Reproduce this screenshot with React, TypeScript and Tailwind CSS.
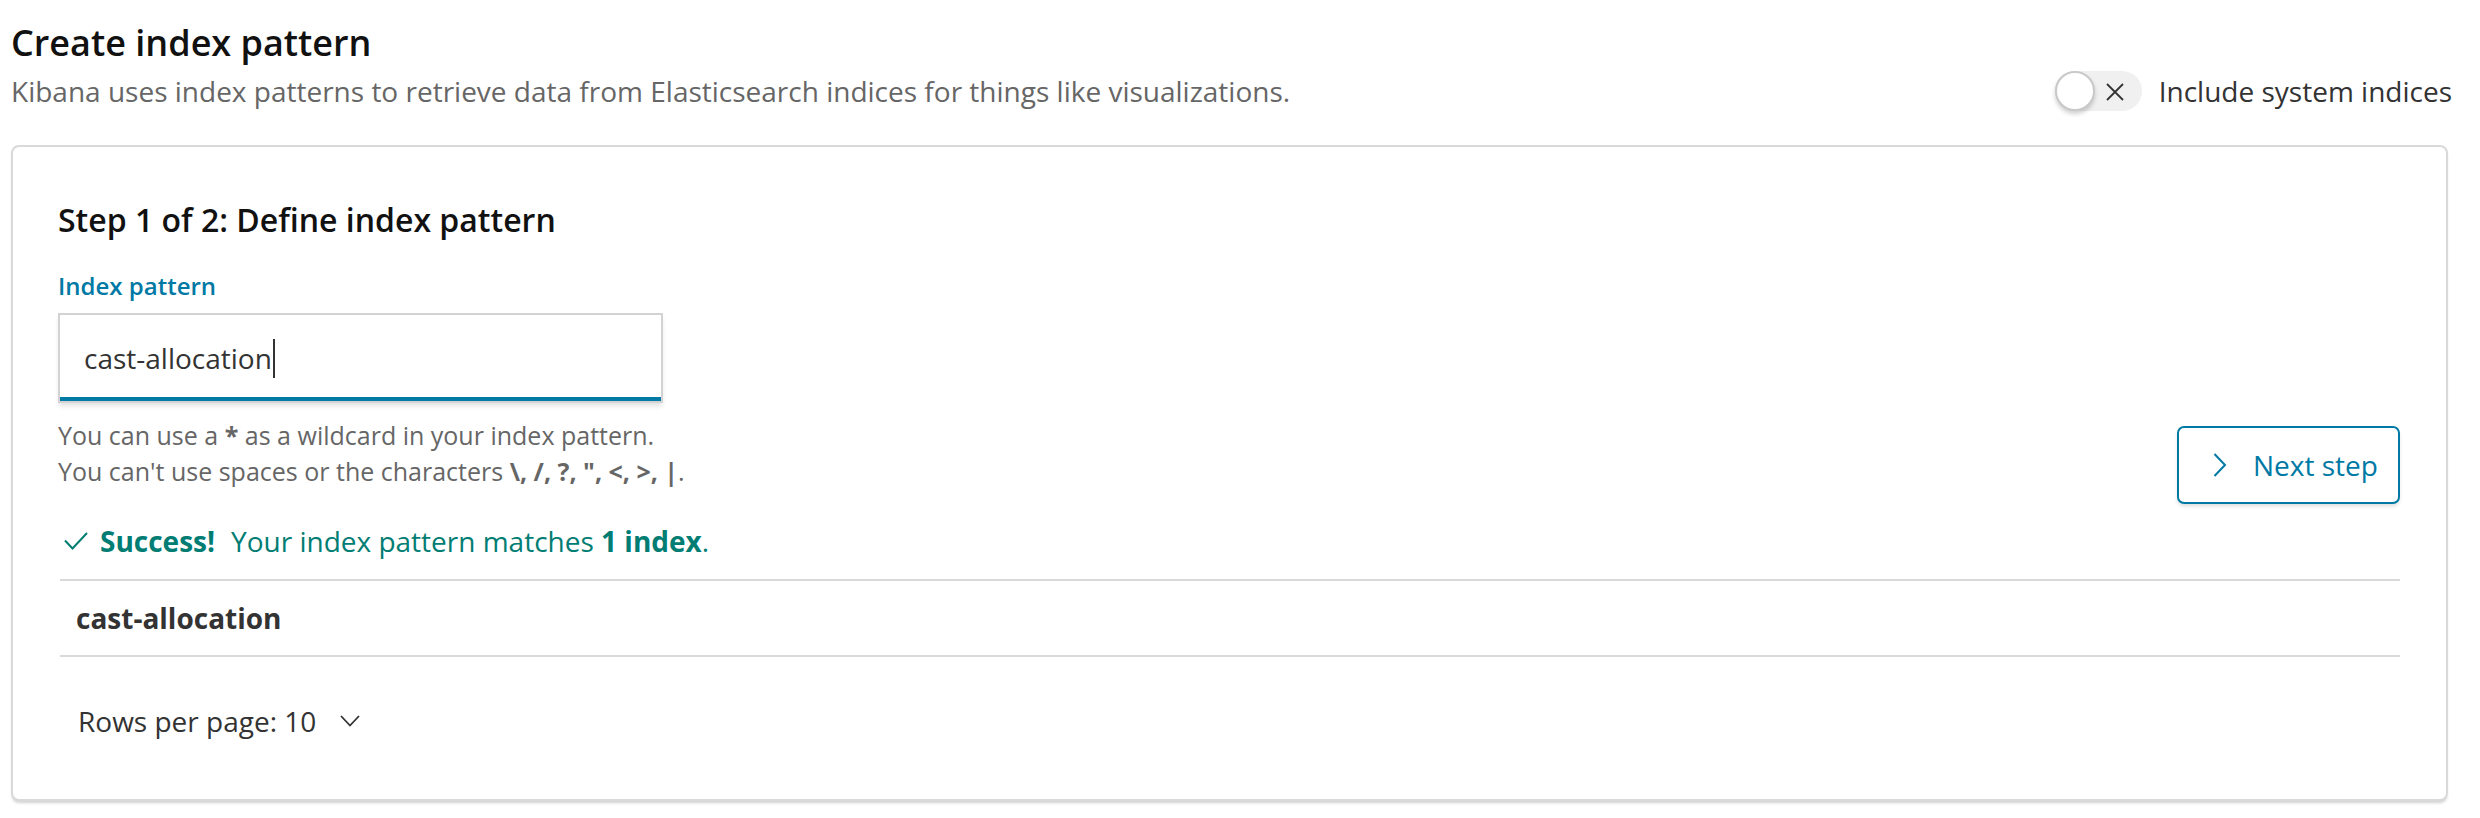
function CheckIcon() {
	return (
		<svg width="24" height="18" viewBox="0 0 24 18" fill="none" className="shrink-0">
			<title>Success</title>
			<polyline points="1,8.5 8.5,16.5 23,1" stroke="#017d73" strokeWidth="2" />
		</svg>
	);
}

function ChevronRight() {
	return (
		<svg width="14" height="24" viewBox="0 0 14 24" fill="none" className="shrink-0">
			<title>Next</title>
			<polyline points="1.5,1 12,12 1.5,23" stroke="#0079a5" strokeWidth="2" />
		</svg>
	);
}

function ChevronDown() {
	return (
		<svg width="20" height="12" viewBox="0 0 20 12" fill="none" className="shrink-0">
			<title>Open</title>
			<polyline points="1,1 10,10.5 19,1" stroke="#333" strokeWidth="1.8" />
		</svg>
	);
}

function SystemToggle() {
	return (
		<div className="flex items-center gap-[17px]">
			<div className="relative h-[40px] w-[87px] rounded-full bg-[#f0f0f0]">
				{/* knob */}
				<div className="absolute left-0 top-0 h-[40px] w-[40px] rounded-full border-2 border-[#c9c9c9] bg-white shadow-[0_3px_4px_rgba(0,0,0,0.18)]" />
				<svg
					className="absolute left-[51px] top-[12px]"
					width="18"
					height="18"
					viewBox="0 0 18 18"
					fill="none"
				>
					<title>Off</title>
					<path d="M1 1L17 17M17 1L1 17" stroke="#333" strokeWidth="1.8" />
				</svg>
			</div>
			<span className="text-[28px] leading-[36px] text-[#333]">Include system indices</span>
		</div>
	);
}

export default function App() {
	return (
		<div className="min-h-screen bg-white pl-[11px] pr-[28px] pt-[22px] font-['Open_Sans',sans-serif]">
			<h1 className="text-[36px] font-semibold leading-[42px] text-[#111]">Create index pattern</h1>
			<div className="mt-[7px] flex h-[40px] items-center justify-between">
				<p className="text-[28px] leading-[36px] text-[#666]">
					Kibana uses index patterns to retrieve data from Elasticsearch indices for things like visualizations.
				</p>
				<SystemToggle />
			</div>

			<div className="mr-[4px] mt-[34px] rounded-[8px] border-2 border-[#d9d9d9] bg-white pb-[60px] pl-[45px] pr-[46px] pt-[53px] shadow-[0_3px_3px_-1px_rgba(0,0,0,0.18)]">
				<h2 className="text-[32px] font-semibold leading-[40px] text-[#111]">Step 1 of 2: Define index pattern</h2>

				<div className="mt-[31px] flex items-start justify-between">
					<div className="flex flex-col">
						<label className="text-[24px] font-semibold leading-[30px] text-[#0079a5]">Index pattern</label>
						<div className="mt-[12px] flex h-[90px] w-[605px] items-center border-2 border-[#d3d3d3] bg-white pl-[24px] shadow-[inset_0_-4px_0_#0079a5,0_4px_5px_-1px_rgba(0,0,0,0.12)]">
							<span className="text-[28px] leading-[36px] text-[#333]">cast-allocation</span>
							<span className="ml-[1px] h-[39px] w-[2px] bg-[#333]" />
						</div>
						<div className="mt-[14px] text-[25px] leading-[36px] text-[#666]">
							<p>
								You can use a <strong>*</strong> as a wildcard in your index pattern.
							</p>
							<p>
								You can't use spaces or the characters <strong>\, /, ?, ", &lt;, &gt;, |</strong>.
							</p>
						</div>
					</div>
					<button
						type="button"
						className="mt-[155px] flex h-[78px] w-[223px] items-center gap-[26px] rounded-[7px] border-2 border-[#0079a5] bg-white pl-[34px] shadow-[0_3px_4px_-1px_rgba(0,0,0,0.15)]"
					>
						<ChevronRight />
						<span className="text-[28px] leading-[36px] text-[#0079a5]">Next step</span>
					</button>
				</div>

				<div className="mt-[19px] flex items-center gap-[12px] pl-[6px] text-[28px] leading-[36px] text-[#017d73]">
					<CheckIcon />
					<span>
						<strong className="font-bold">Success!</strong>
						<span className="ml-[16px]">Your index pattern matches </span>
						<strong className="font-bold">1 index</strong>.
					</span>
				</div>

				<div className="ml-[2px] mt-[20px] border-y-2 border-[#d9d9d9]">
					<div className="flex h-[74px] items-center pl-[16px]">
						<span className="text-[28px] font-bold leading-[36px] text-[#333]">cast-allocation</span>
					</div>
				</div>

				<div className="ml-[20px] mt-[46px] flex items-center gap-[24px]">
					<span className="text-[28px] leading-[36px] text-[#333]">Rows per page: 10</span>
					<ChevronDown />
				</div>
			</div>
		</div>
	);
}
